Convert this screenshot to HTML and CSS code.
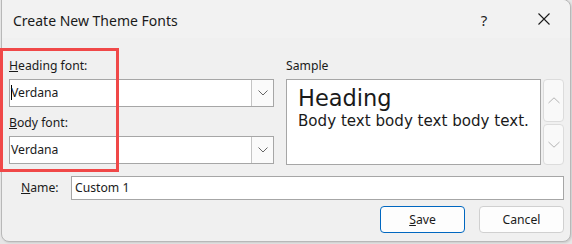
FILE: index.html
```html
<!DOCTYPE html>
<html>
<head>
<meta charset="utf-8">
<link rel="stylesheet" href="styles.css">
</head>
<body>
<div class="dialog">
  <div class="titlebar">
    <span class="title">Create New Theme Fonts</span>
    <span class="tb-btn help">?</span>
    <span class="tb-btn close">
      <svg width="12" height="12" viewBox="0 0 12 12"><path d="M0.5 0.5 L11.5 11.5 M11.5 0.5 L0.5 11.5" stroke="#1a1a1a" stroke-width="1.1" fill="none"/></svg>
    </span>
  </div>
  <div class="content">
    <div class="top">
      <div class="fonts">
        <div class="label"><u>H</u>eading font:</div>
        <div class="combo">
          <div class="combo-text"><span class="caret"></span>Verdana</div>
          <div class="drop"><svg width="10" height="6" viewBox="0 0 10 6"><path d="M0.5 0.5 L5 5 L9.5 0.5" stroke="#666" stroke-width="1" fill="none"/></svg></div>
        </div>
        <div class="label second"><u>B</u>ody font:</div>
        <div class="combo">
          <div class="combo-text">Verdana</div>
          <div class="drop"><svg width="10" height="6" viewBox="0 0 10 6"><path d="M0.5 0.5 L5 5 L9.5 0.5" stroke="#666" stroke-width="1" fill="none"/></svg></div>
        </div>
      </div>
      <div class="sample-col">
        <div class="label">Sample</div>
        <div class="sample-row">
          <div class="sample">
            <div class="s-head">Heading</div>
            <div class="s-body">Body text body text body text.</div>
          </div>
          <div class="spin">
            <div class="spin-btn up"><svg width="12" height="7" viewBox="0 0 12 7"><path d="M0.5 6 L6 0.8 L11.5 6" stroke="#b4b4b4" stroke-width="1" fill="none"/></svg></div>
            <div class="spin-btn down"><svg width="12" height="7" viewBox="0 0 12 7"><path d="M0.5 1 L6 6.2 L11.5 1" stroke="#b4b4b4" stroke-width="1" fill="none"/></svg></div>
          </div>
        </div>
      </div>
    </div>
    <div class="name-row">
      <div class="name-label"><u>N</u>ame:</div>
      <div class="name-input">Custom 1</div>
    </div>
    <div class="buttons">
      <div class="btn primary"><u>S</u>ave</div>
      <div class="btn">Cancel</div>
    </div>
  </div>
  <div class="annot"></div>
</div>
</body>
</html>
```
FILE: styles.css
```css
html, body {
  margin: 0;
  padding: 0;
}
body {
  background: #e6e6e6;
  width: 572px;
  height: 244px;
  overflow: hidden;
  font-family: "Noto Sans", "Open Sans", sans-serif;
  font-size: 12.2px;
  color: #1a1a1a;
}
.dialog {
  position: relative;
  box-sizing: border-box;
  margin: -1px 0 0 1px;
  width: 570px;
  height: 243px;
  border: 1px solid #b8b8b8;
  border-radius: 0 8px 8px 8px;
  background: #f0f0f0;
  display: flex;
  flex-direction: column;
  box-shadow: 1px 1px 2px rgba(0, 0, 0, 0.12);
}
.titlebar {
  height: 38px;
  box-sizing: border-box;
  padding: 3px 3px 0 11px;
  display: flex;
  background: #f2f2f2;
  border-radius: 0 8px 0 0;
}
.title {
  font-size: 14px;
  line-height: 35px;
  flex: 1;
}
.tb-btn {
  width: 46px;
  height: 35px;
  display: flex;
  align-items: center;
  justify-content: center;
}
.help {
  font-size: 15px;
  line-height: 35px;
  margin-right: 14px;
  color: #222;
}
.close svg {
  display: block;
  margin-top: -3px;
}
.content {
  padding: 20px 5px 0 7px;
  display: flex;
  flex-direction: column;
}
.top {
  display: flex;
  gap: 12px;
}
.fonts {
  width: 265px;
  display: flex;
  flex-direction: column;
}
.label {
  line-height: 16px;
  height: 16px;
  margin-bottom: 5px;
  white-space: nowrap;
}
.label.second {
  margin-top: 8px;
}
u {
  text-decoration-thickness: 1px;
  text-underline-offset: 1px;
}
.combo {
  box-sizing: border-box;
  height: 28px;
  border: 1px solid #a6a6a6;
  background: #fff;
  display: flex;
}
.combo-text {
  flex: 1;
  line-height: 26px;
  padding-left: 1px;
  position: relative;
}
.caret {
  display: inline-block;
  width: 1px;
  height: 15px;
  background: #000;
  vertical-align: -3px;
  margin-right: -1px;
}
.drop {
  width: 21px;
  border-left: 1px solid #c4c4c4;
  background: #fafafa;
  display: flex;
  align-items: center;
  justify-content: center;
}
.drop svg {
  display: block;
  margin-top: -1px;
}
.sample-col {
  display: flex;
  flex-direction: column;
}
.sample-row {
  display: flex;
  gap: 2px;
}
.sample {
  box-sizing: border-box;
  width: 255px;
  height: 86px;
  border: 1px solid #a6a6a6;
  background: #fff;
  padding: 5px 0 0 11px;
  font-family: "DejaVu Sans", Verdana, sans-serif;
  color: #1a1a1a;
  white-space: nowrap;
}
.s-head {
  font-size: 22.5px;
  line-height: 26px;
}
.s-body {
  font-size: 15.1px;
  line-height: 18px;
  margin-top: 1px;
}
.spin {
  display: flex;
  flex-direction: column;
  gap: 2px;
  width: 21px;
}
.spin-btn {
  box-sizing: border-box;
  border: 1px solid #dcdcdc;
  border-radius: 4px;
  background: #f9f9f9;
  display: flex;
  align-items: center;
  justify-content: center;
}
.spin-btn.up {
  height: 43px;
}
.spin-btn.down {
  height: 41px;
}
.name-row {
  margin-top: 11px;
  display: flex;
  height: 24px;
}
.name-label {
  width: 50px;
  padding-left: 12px;
  line-height: 24px;
}
.name-input {
  box-sizing: border-box;
  width: 493px;
  height: 24px;
  border: 1px solid #a6a6a6;
  background: #fff;
  padding-left: 3px;
  line-height: 22px;
}
.buttons {
  margin-top: 6px;
  display: flex;
  justify-content: flex-end;
  gap: 14px;
  padding-right: 1px;
}
.btn {
  box-sizing: border-box;
  width: 85px;
  height: 27px;
  border: 1px solid #d0d0d0;
  border-radius: 4px;
  background: #fdfdfd;
  text-align: center;
  line-height: 25px;
}
.btn.primary {
  border-color: #0067c0;
}
.annot {
  position: absolute;
  left: -2px;
  top: 48px;
  width: 119px;
  height: 124px;
  box-sizing: border-box;
  border: 3px solid #f04848;
}
```
